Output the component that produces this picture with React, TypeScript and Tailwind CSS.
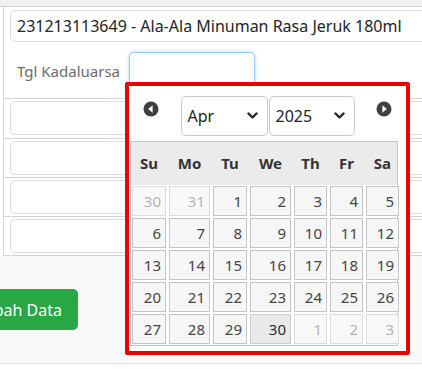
import React from "react";

const FONT = { fontFamily: '"Noto Sans", "Open Sans", Arial, sans-serif' };

function Chevron() {
  return (
    <svg width="11" height="8" viewBox="0 0 11 8" className="block">
      <polyline points="1.5,1.5 5.5,5.5 9.5,1.5" fill="none" stroke="#222" strokeWidth="2.4" strokeLinecap="round" strokeLinejoin="round" />
    </svg>
  );
}

function CircleArrow({ dir }: { dir: "l" | "r" }) {
  return (
    <svg width="16" height="16" viewBox="0 0 16 16" className="block">
      <circle cx="8" cy="8" r="7.5" fill="#3f3f3f" />
      {dir === "l" ? (
        <polygon points="9.6,4.2 9.6,11.8 5.2,8" fill="#fff" />
      ) : (
        <polygon points="6.4,4.2 6.4,11.8 10.8,8" fill="#fff" />
      )}
    </svg>
  );
}

type Day = { n: number; other?: boolean; hover?: boolean };

const weeks: Day[][] = [
  [{ n: 30, other: true }, { n: 31, other: true }, { n: 1 }, { n: 2 }, { n: 3 }, { n: 4 }, { n: 5 }],
  [{ n: 6 }, { n: 7 }, { n: 8 }, { n: 9 }, { n: 10 }, { n: 11 }, { n: 12 }],
  [{ n: 13 }, { n: 14 }, { n: 15 }, { n: 16 }, { n: 17 }, { n: 18 }, { n: 19 }],
  [{ n: 20 }, { n: 21 }, { n: 22 }, { n: 23 }, { n: 24 }, { n: 25 }, { n: 26 }],
  [{ n: 27 }, { n: 28 }, { n: 29 }, { n: 30, hover: true }, { n: 1, other: true }, { n: 2, other: true }, { n: 3, other: true }],
];

const heads = ["Su", "Mo", "Tu", "We", "Th", "Fr", "Sa"];

function EmptyRow({ h }: { h: string }) {
  return (
    <div className={`${h} border-b border-[#d4d4d4] pt-[2px] pl-[6px]`}>
      <div className="h-[34px] w-[600px] rounded-[5px] border border-[#dcdcdc] bg-white" />
    </div>
  );
}

export default function App() {
  return (
    <div className="relative w-[422px] h-[369px] overflow-hidden bg-white" style={FONT}>
      <div className="h-[7px] bg-[#f1f1f1] border-b border-[#d4d4d4]" />
      <div className="ml-[3px] border-l border-[#d4d4d4]">
        <div className="h-[92px] border-b border-[#d4d4d4] pt-[3px] pl-[6px]">
          <div className="h-[32px] w-[600px] rounded-[5px] border border-[#dcdcdc] bg-white flex items-center pl-[6px] text-[16px] text-[#212529]">
            231213113649 - Ala-Ala Minuman Rasa Jeruk 180ml
          </div>
          <div className="mt-[10px] flex items-start">
            <div className="pl-[7px] pt-[8px] text-[15px] text-[#6c6c6c] w-[119px]">Tgl Kadaluarsa</div>
            <div className="h-[36px] w-[126px] rounded-[5px] border border-[#9ccbee] shadow-[0_0_3px_1px_rgba(120,180,230,0.35)] bg-white" />
          </div>
        </div>
        <EmptyRow h="h-[40px]" />
        <EmptyRow h="h-[39px]" />
        <EmptyRow h="h-[39px]" />
        <EmptyRow h="h-[39px]" />
      </div>
      <div className="h-[108px] bg-[#fafafa] border-b border-[#dedede] pt-[33px]">
        <div className="ml-[-52px] w-[130px] h-[41px] rounded-[5px] bg-[#28a745] text-white text-[16px] flex items-center justify-end pr-[16px]">
          Tambah Data
        </div>
      </div>

      {/* datepicker */}
      <div className="absolute left-[125px] top-[82px] w-[285px] h-[273px] border-4 border-[#ee0000] rounded-[2px] bg-white">
        <div className="relative h-[55px]">
          <div className="absolute left-[14px] top-[15px]"><CircleArrow dir="l" /></div>
          <div className="absolute left-[247px] top-[15px]"><CircleArrow dir="r" /></div>
          <div className="flex justify-center pt-[10px]">
            <div className="w-[87px] h-[40px] rounded-[5px] border border-[#c8c8c8] flex items-center justify-between pl-[6px] pr-[9px] text-[16px] text-[#222]">
              <span>Apr</span>
              <Chevron />
            </div>
            <div className="ml-[1px] w-[86px] h-[40px] rounded-[5px] border border-[#c8c8c8] flex items-center justify-between pl-[6px] pr-[9px] text-[16px] text-[#222]">
              <span>2025</span>
              <Chevron />
            </div>
          </div>
        </div>
        <div className="ml-[1px] w-[268px] border border-[#c5c5c5] bg-white">
          <div className="h-[43px] bg-[#ebebeb] grid grid-cols-[34px_41px_34px_41px_33px_33px_33px] gap-x-[3px] pl-[1px] items-center text-[15px] font-bold text-[#333]">
            {heads.map((h) => (
              <div key={h} className="text-center">{h}</div>
            ))}
          </div>
          <div className="pt-[1px] pb-[1px] pl-[1px] grid grid-cols-[34px_41px_34px_41px_33px_33px_33px] gap-x-[3px] gap-y-[2px]">
            {weeks.flat().map((d, i) => (
              <div
                key={i}
                className={
                  "h-[30px] border flex items-center justify-end pr-[4px] text-[15px] " +
                  (d.other
                    ? "border-[#dcdcdc] bg-[#f8f8f8] text-[#b4b4b4]"
                    : d.hover
                    ? "border-[#cccccc] bg-[#e9e9e9] text-[#2b2b2b]"
                    : "border-[#c5c5c5] bg-[#f6f6f6] text-[#454545]")
                }
              >
                {d.n}
              </div>
            ))}
          </div>
        </div>
      </div>
    </div>
  );
}
